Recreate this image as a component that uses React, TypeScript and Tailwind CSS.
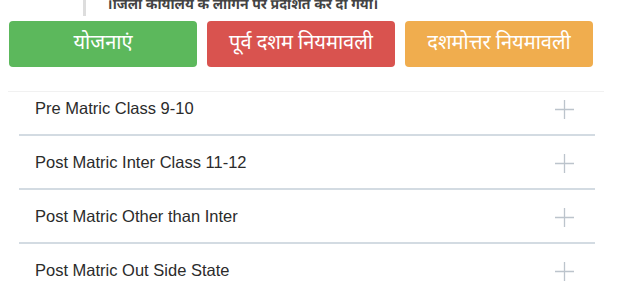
const schemes = [
    "Pre Matric Class 9-10",
    "Post Matric Inter Class 11-12",
    "Post Matric Other than Inter",
    "Post Matric Out Side State",
];

const hindi = { fontFamily: '"Noto Sans Devanagari", "Noto Sans", "Lohit Devanagari", sans-serif' };

function PlusIcon() {
    return <svg width="19" height="19" viewBox="0 0 19 19" className="mt-[2px]">
        <path d="M0 9.5H19M9.5 0V19" stroke="#bcc4cc" strokeWidth="1.3" />
    </svg>
}

export default function App() {
    return <div className="w-[624px] h-[296px] bg-white overflow-hidden" style={{ fontFamily: '"Liberation Sans", Arial, sans-serif' }}>
        {/* notice text, scrolled so only the last line shows */}
        <div className="h-[16px] overflow-hidden">
            <div className="ml-[83px] pl-[21px] border-l-[3px] border-[#dddddd] -mt-[5px]">
                <p className="text-[14px] leading-[22px] font-bold text-[#444] whitespace-nowrap" style={hindi}>
                    ।जिला कार्यालय के लॉगिन पर प्रदर्शित कर दी गयी।
                </p>
            </div>
        </div>

        <div className="flex gap-[10px] pl-[9px] mt-[5px]">
            <button className="w-[188px] h-[46px] rounded-[4px] bg-[#5cb85c] text-white text-[20px]" style={hindi}>योजनाएं</button>
            <button className="w-[188px] h-[46px] rounded-[4px] bg-[#d9534f] text-white text-[20px]" style={hindi}>पूर्व दशम नियमावली</button>
            <button className="w-[188px] h-[46px] rounded-[4px] bg-[#f0ad4e] text-white text-[20px]" style={hindi}>दशमोत्तर नियमावली</button>
        </div>

        <div className="mt-[24px] ml-[8px] w-[596px] border-t border-[#f1f1f1]">
            <div className="ml-[11px] w-[576px]">
                {schemes.map((s, i) =>
                    <div key={s} className={"flex items-center justify-between border-b-2 border-[#d3dbe2] pl-[16px] pr-[21px] " + (i === 0 ? "h-[44px] pb-[10px]" : "h-[54px]")}>
                        <span className="text-[16.5px] text-[#2b2b2b]">{s}</span>
                        <PlusIcon />
                    </div>
                )}
            </div>
        </div>
    </div>
}
